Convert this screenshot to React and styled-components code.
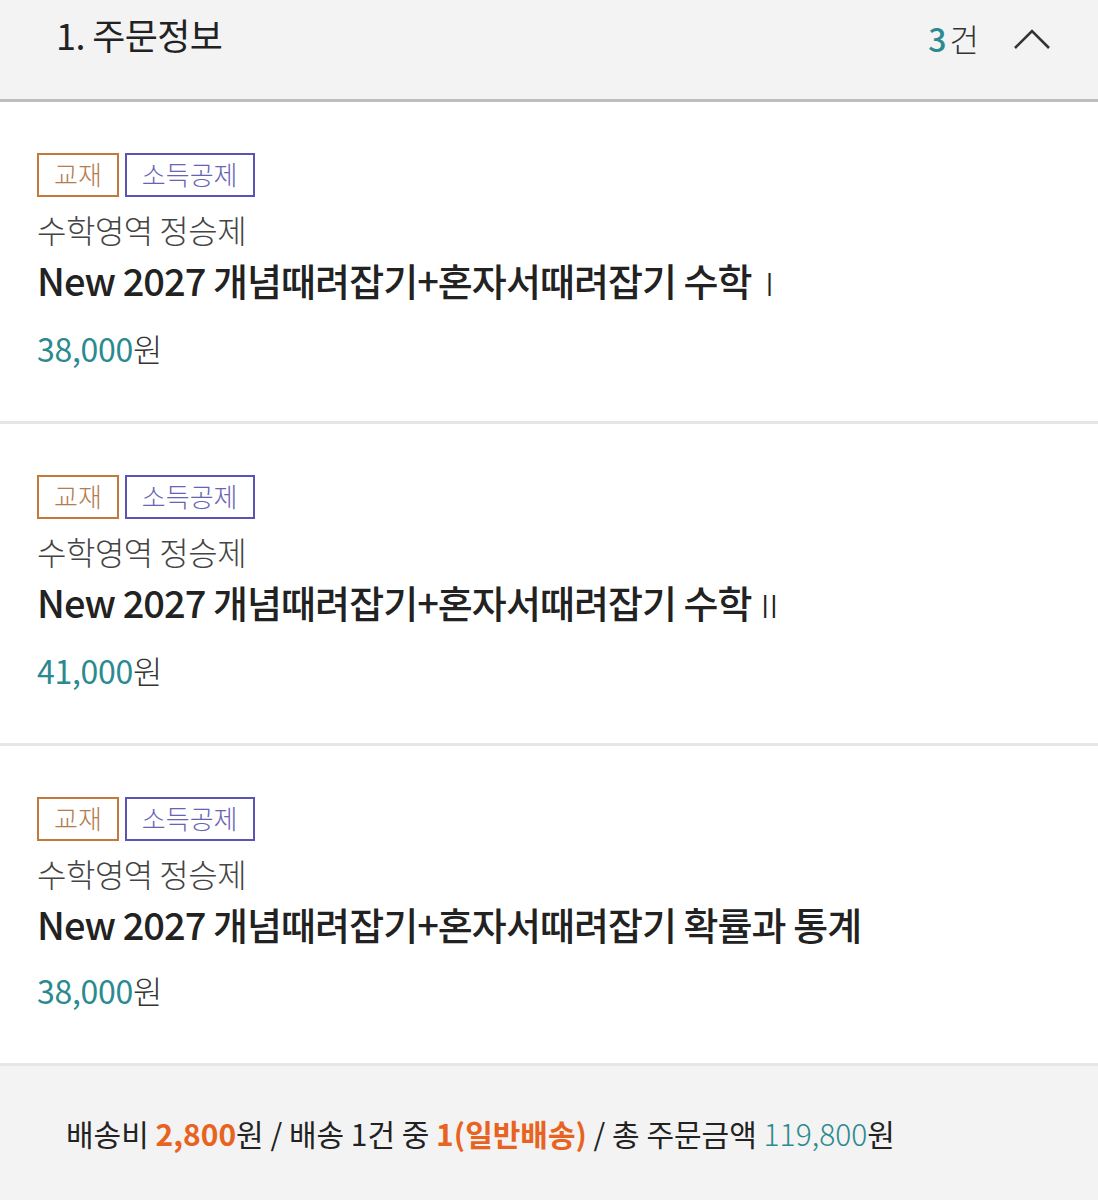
import styled, { createGlobalStyle } from "styled-components";

const GlobalStyle = createGlobalStyle`
  body {
    margin: 0;
    background: #ffffff;
    font-family: "Noto Sans CJK KR", "Noto Sans", sans-serif;
    color: #222;
  }
`

const items = [
  { author: "수학영역 정승제", title: "New 2027 개념때려잡기+혼자서때려잡기 수학", suffix: "Ⅰ", price: "38,000" },
  { author: "수학영역 정승제", title: "New 2027 개념때려잡기+혼자서때려잡기 수학", suffix: "Ⅱ", price: "41,000" },
  { author: "수학영역 정승제", title: "New 2027 개념때려잡기+혼자서때려잡기 확률과 통계", suffix: "", price: "38,000" },
]

const ChevronUp = () => (
  <svg width="40" height="28" viewBox="0 0 40 28">
    <path d="M3 24 L20 7 L37 24" fill="none" stroke="#333" strokeWidth="2.6" />
  </svg>
)

const App = () => {
  return (
    <>
      <GlobalStyle />
      <Page>
        <Header>
          <HeaderTitle>1. 주문정보</HeaderTitle>
          <HeaderRight>
            <Count><em>3</em>건</Count>
            <ChevronUp />
          </HeaderRight>
        </Header>
        {items.map((item, i) => (
          <Item key={i}>
            <Tags>
              <Tag $color="#c27a3a" $text="#b57c4f">교재</Tag>
              <Tag $color="#5b54b5" $text="#6864b4">소득공제</Tag>
            </Tags>
            <Author>{item.author}</Author>
            <Title>
              {item.title}
              {item.suffix && <Roman>{item.suffix}</Roman>}
            </Title>
            <Price><em>{item.price}</em>원</Price>
          </Item>
        ))}
        <Footer>
          배송비 <Orange>2,800</Orange>원 / 배송 1건 중 <Orange>1(일반배송)</Orange> / 총 주문금액 <Teal>119,800</Teal>원
        </Footer>
      </Page>
    </>
  )
}

const Page = styled.div`
  width: 1098px;
  min-height: 1200px;
  display: flex;
  flex-direction: column;
`

const Header = styled.div`
  height: 102px;
  box-sizing: border-box;
  background: #f3f3f3;
  border-bottom: 3px solid #bdbdbd;
  display: flex;
  justify-content: space-between;
  align-items: flex-start;
  padding: 10px 46px 0 56px;
`

const HeaderTitle = styled.h1`
  margin: 0;
  font-size: 36px;
  font-weight: 400;
  letter-spacing: -0.6px;
  line-height: 48px;
  color: #222;
`

const HeaderRight = styled.div`
  display: flex;
  align-items: center;
  gap: 34px;
  padding-top: 6px;
`

const Count = styled.span`
  font-size: 32px;
  line-height: 44px;
  font-weight: 300;
  color: #333;
  letter-spacing: -1px;
  em {
    font-style: normal;
    font-weight: 500;
    color: #2b8a8f;
    margin-right: 4px;
  }
`

const Item = styled.div`
  padding: 51px 37px 50px;
  border-bottom: 3px solid #e6e6e6;
  background: #fff;
`

const Tags = styled.div`
  display: flex;
  gap: 6px;
  margin-bottom: 8px;
`

const Tag = styled.span`
  box-sizing: border-box;
  height: 44px;
  padding: 0 15px;
  border: 2.5px solid ${p => p.$color};
  color: ${p => p.$text};
  font-size: 26px;
  font-weight: 300;
  line-height: 38px;
`

const Author = styled.div`
  font-size: 32px;
  font-weight: 300;
  line-height: 48px;
  color: #444;
  letter-spacing: -0.5px;
`

const Title = styled.div`
  font-size: 38px;
  font-weight: 500;
  line-height: 54px;
  color: #222;
  letter-spacing: -0.95px;
`

const Roman = styled.span`
  font-weight: 300;
  margin-left: 2px;
  font-size: 32px;
`

const Price = styled.div`
  margin-top: 16px;
  font-size: 32px;
  font-weight: 300;
  line-height: 46px;
  color: #333;
  letter-spacing: -0.3px;
  em {
    font-style: normal;
    font-weight: 400;
    color: #2b8a8f;
  }
`

const Footer = styled.div`
  flex: 1;
  background: #f3f3f3;
  padding: 47px 66px 0;
  font-size: 30px;
  line-height: 40px;
  font-weight: 400;
  color: #222;
  letter-spacing: 0;
`

const Orange = styled.span`
  color: #e8631f;
  font-weight: 700;
`

const Teal = styled.span`
  color: #2b8a8f;
  font-weight: 300;
`

export default App
